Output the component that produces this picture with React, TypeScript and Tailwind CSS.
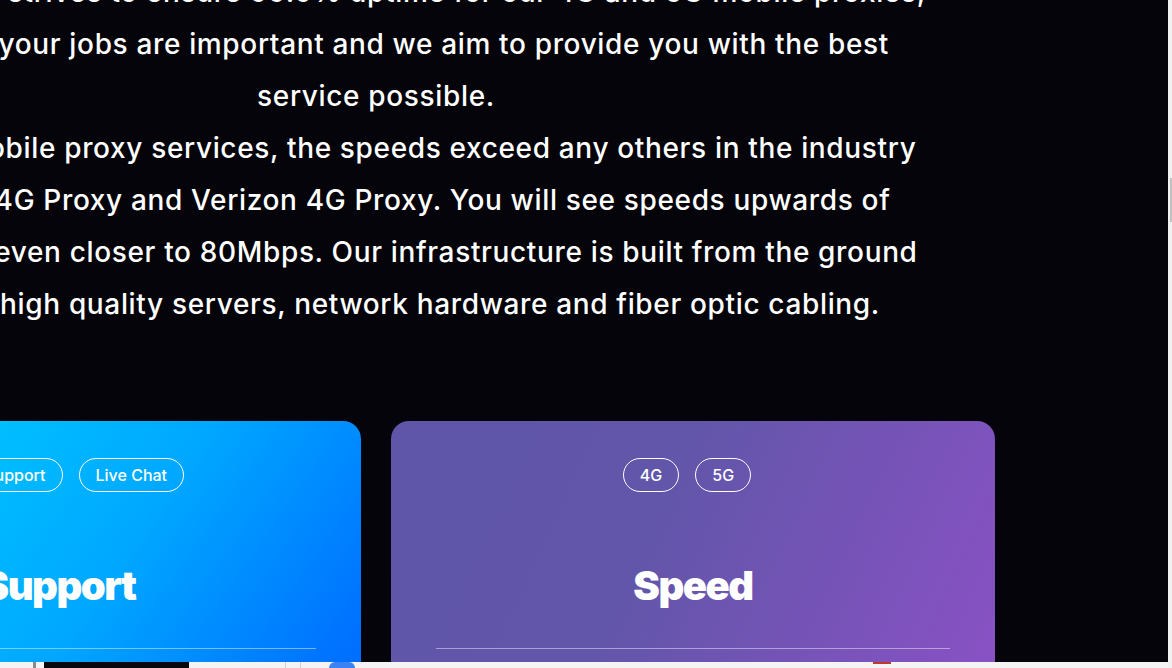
import React from 'react';

const lines = [
  'Our network strives to ensure 99.9% uptime for our 4G and 5G mobile proxies,',
  'We know your jobs are important and we aim to provide you with the best',
  'service possible.',
  'With our mobile proxy services, the speeds exceed any others in the industry',
  'T-Mobile 4G Proxy and Verizon 4G Proxy. You will see speeds upwards of',
  '50Mbps or even closer to 80Mbps. Our infrastructure is built from the ground',
  'up using high quality servers, network hardware and fiber optic cabling.',
];

function Pill({ label }: { label: string }) {
  return (
    <span className="mr-4 inline-flex h-[34px] items-center rounded-full border border-white px-4 text-[16px] font-medium text-white">
      {label}
    </span>
  );
}

function Card({ title, tags, bg }: { title: string; tags: string[]; bg: string }) {
  return (
    <div className={`flex h-[320px] flex-col items-center rounded-[18px] pt-[37px] ${bg}`}>
      <div className="flex pl-1">
        {tags.map(t => <Pill key={t} label={t} />)}
      </div>
      <h3 className="mt-[74px] text-[40px] leading-[40px] font-black tracking-[-1.5px] text-white">{title}</h3>
      <div className="mt-[42px] h-px w-[514px] bg-white/45" />
    </div>
  );
}

export default function App() {
  return (
    <div className="relative h-[668px] w-[1172px] overflow-hidden bg-[#05040a] font-['Inter',sans-serif]">
      <div className="-ml-[243px] w-[1238px]">
        {/* intro copy */}
        <div className="-mt-[34px] text-center text-[28px] leading-[52px] font-medium tracking-[0.65px] text-white">
          {lines.map(l => <div key={l} className="whitespace-nowrap">{l}</div>)}
        </div>

        {/* feature cards */}
        <div className="mt-[91px] grid grid-cols-2 gap-[30px]">
          <Card title="Support" tags={['Email Support', 'Live Chat']} bg="bg-[linear-gradient(125deg,#00d8ff_0%,#00a8ff_55%,#0062ff_100%)]" />
          <Card title="Speed" tags={['4G', '5G']} bg="bg-[linear-gradient(115deg,#6056a9_0%,#6156a9_40%,#8c51c6_100%)]" />
        </div>
      </div>

      {/* scrollbar */}
      <div className="absolute top-0 right-0 h-full w-[4px] bg-[#f1f1f1]">
        <div className="absolute top-[178px] right-0 h-[44px] w-[2px] bg-[#c1c1c1]" />
      </div>

      {/* bottom strip */}
      <div className="absolute bottom-0 left-0 flex h-[6px] w-[1168px] items-stretch bg-[#f4f4f4]">
        <div className="w-[33px]" />
        <div className="w-[3px] bg-[#8a8a8a]" />
        <div className="w-[8px]" />
        <div className="w-[145px] bg-[#08070e]" />
        <div className="w-[96px]" />
        <div className="w-px bg-[#d0d0d0]" />
        <div className="w-[14px]" />
        <div className="w-px bg-[#d0d0d0]" />
        <div className="w-[28px]" />
        <div className="w-[26px] rounded-t-full bg-[#3b82f6]" />
        <div className="w-[518px]" />
        <div className="h-[2px] w-[18px] bg-[#c0392b]" />
      </div>
    </div>
  );
}
